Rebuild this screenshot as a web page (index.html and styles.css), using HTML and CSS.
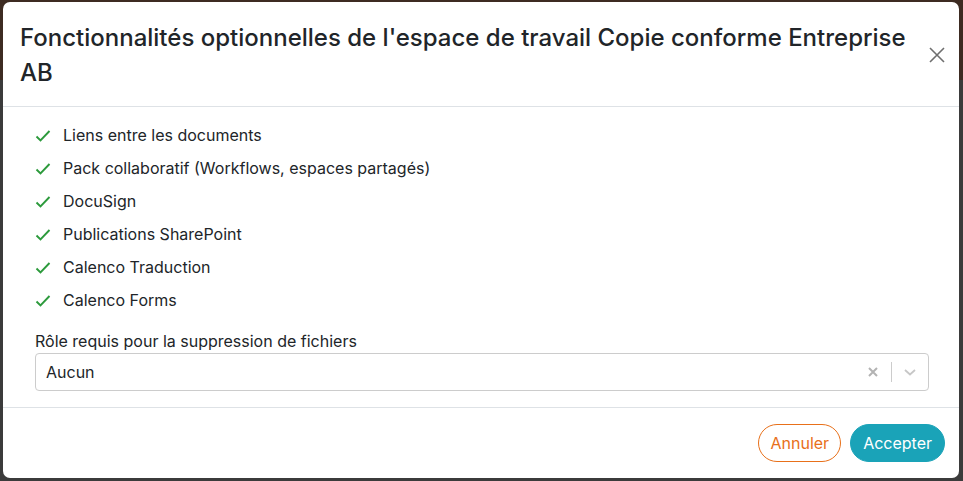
FILE: index.html
```html
<!DOCTYPE html>
<html lang="fr">
<head>
<meta charset="utf-8">
<link rel="stylesheet" href="styles.css">
</head>
<body>
<div class="backdrop">
  <div class="modal">
    <div class="modal-header">
      <h1 class="modal-title">Fonctionnalités optionnelles de l'espace de travail Copie conforme Entreprise AB</h1>
      <button class="close" aria-label="Fermer">
        <svg width="18" height="18" viewBox="0 0 18 18"><path d="M2 2L16 16M16 2L2 16" stroke="#6f6f6f" stroke-width="1.6" fill="none"/></svg>
      </button>
    </div>
    <div class="modal-body">
      <ul class="features">
        <li><span class="check"><svg width="16" height="14" viewBox="0 0 16 14"><path d="M1.5 7.5L5.5 11.5L14.5 2" stroke="#2c9a3c" stroke-width="1.9" fill="none"/></svg></span>Liens entre les documents</li>
        <li><span class="check"><svg width="16" height="14" viewBox="0 0 16 14"><path d="M1.5 7.5L5.5 11.5L14.5 2" stroke="#2c9a3c" stroke-width="1.9" fill="none"/></svg></span>Pack collaboratif (Workflows, espaces partagés)</li>
        <li><span class="check"><svg width="16" height="14" viewBox="0 0 16 14"><path d="M1.5 7.5L5.5 11.5L14.5 2" stroke="#2c9a3c" stroke-width="1.9" fill="none"/></svg></span>DocuSign</li>
        <li><span class="check"><svg width="16" height="14" viewBox="0 0 16 14"><path d="M1.5 7.5L5.5 11.5L14.5 2" stroke="#2c9a3c" stroke-width="1.9" fill="none"/></svg></span>Publications SharePoint</li>
        <li><span class="check"><svg width="16" height="14" viewBox="0 0 16 14"><path d="M1.5 7.5L5.5 11.5L14.5 2" stroke="#2c9a3c" stroke-width="1.9" fill="none"/></svg></span>Calenco Traduction</li>
        <li><span class="check"><svg width="16" height="14" viewBox="0 0 16 14"><path d="M1.5 7.5L5.5 11.5L14.5 2" stroke="#2c9a3c" stroke-width="1.9" fill="none"/></svg></span>Calenco Forms</li>
      </ul>
      <label class="field-label">Rôle requis pour la suppression de fichiers</label>
      <div class="select">
        <span class="select-value">Aucun</span>
        <span class="select-indicators">
          <svg class="clear" width="12" height="12" viewBox="0 0 12 12"><path d="M2 2L10 10M10 2L2 10" stroke="#b3b3b3" stroke-width="2" fill="none"/></svg>
          <span class="sep"></span>
          <svg class="chev" width="14" height="10" viewBox="0 0 14 10"><path d="M2 3L7 7.5L12 3" stroke="#c7c7c7" stroke-width="1.8" fill="none"/></svg>
        </span>
      </div>
    </div>
    <div class="modal-footer">
      <button class="btn btn-cancel">Annuler</button>
      <button class="btn btn-accept">Accepter</button>
    </div>
  </div>
</div>
</body>
</html>
```

FILE: styles.css
```css
* { box-sizing: border-box; }
html, body { margin: 0; padding: 0; }
body {
  width: 963px;
  height: 481px;
  overflow: hidden;
  background: linear-gradient(#3d2b22 0, #3d2b22 80px, #3b3b3b 80px);
  font-family: Inter, "Noto Sans", sans-serif;
  color: #212529;
}
.backdrop {
  padding: 2px 4px 3px 3px;
  height: 481px;
}
.modal {
  background: #fff;
  border-radius: 7px;
  height: 476px;
  display: flex;
  flex-direction: column;
}
.modal-header {
  display: flex;
  align-items: center;
  border-bottom: 1px solid #dee2e6;
  padding: 18px 12px 16px 17px;
}
.modal-title {
  flex: 1;
  margin: 0;
  font-size: 24px;
  font-weight: 500;
  line-height: 35px;
  color: #212529;
}
.close {
  border: 0;
  background: none;
  padding: 0;
  margin: 0 0 0 18px;
  width: 20px;
  height: 20px;
  display: flex;
  align-items: center;
  justify-content: center;
}
.modal-body {
  padding: 11px 30px 16px 32px;
}
.features {
  list-style: none;
  margin: 0 0 15px 0;
  padding: 0;
}
.features li {
  display: flex;
  align-items: center;
  height: 33px;
  font-size: 16px;
}
.check {
  width: 28px;
  display: flex;
  align-items: center;
  padding-top: 3px;
}
.field-label {
  display: block;
  font-size: 16px;
  line-height: 20px;
  margin-bottom: 2px;
}
.select {
  display: flex;
  align-items: center;
  height: 38px;
  border: 1px solid #cccccc;
  border-radius: 4px;
  padding-left: 10px;
}
.select-value {
  flex: 1;
  font-size: 16px;
}
.select-indicators {
  display: flex;
  align-items: center;
  height: 100%;
}
.clear { margin-right: 12px; }
.sep {
  width: 1px;
  height: 20px;
  background: #cccccc;
}
.chev { margin: 0 11px 0 11px; }
.modal-footer {
  margin-top: auto;
  border-top: 1px solid #dee2e6;
  display: flex;
  justify-content: flex-end;
  gap: 9px;
  padding: 16px 14px 16px 0;
}
.btn {
  font-family: Inter, "Noto Sans", sans-serif;
  font-size: 16px;
  height: 38px;
  border-radius: 19px;
  padding: 0 12px;
  cursor: pointer;
}
.btn-cancel {
  background: #fff;
  color: #e8701a;
  border: 1px solid #e8701a;
  padding: 0 11px;
}
.btn-accept {
  background: #1aa3b8;
  color: #fff;
  border: 1px solid #1aa3b8;
}
```
